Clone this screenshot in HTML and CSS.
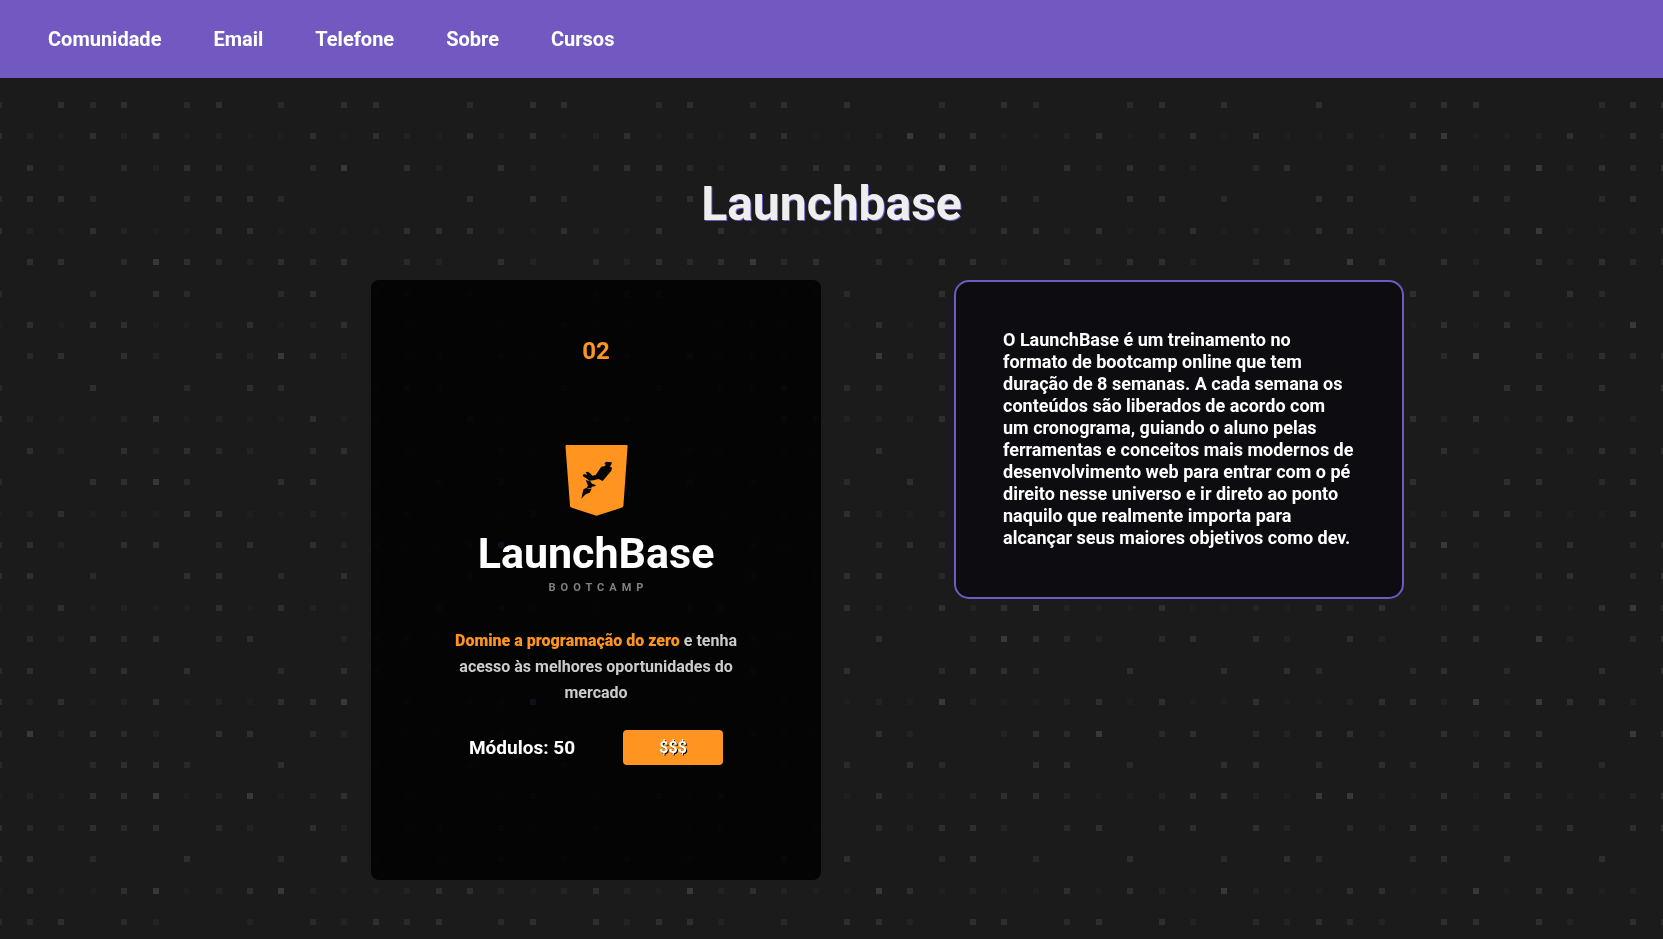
FILE: index.html
```html
<!DOCTYPE html>
<html lang="pt-BR">
<head>
  <meta charset="utf-8">
  <meta name="viewport" content="width=device-width, initial-scale=1">
  <title>Launchbase</title>
  <link rel="stylesheet" href="styles.css">
</head>
<body>
  <canvas class="backdrop" aria-hidden="true"></canvas>

  <header class="header">
    <nav class="links">
      <a href="#comunidade">Comunidade</a>
      <a href="#email">Email</a>
      <a href="#telefone">Telefone</a>
      <a href="#sobre">Sobre</a>
      <a href="#cursos">Cursos</a>
    </nav>
  </header>

  <main class="page">
    <h1 class="title">Launchbase</h1>

    <div class="course">
      <section class="card">
        <span class="card-number">02</span>
        <svg class="card-logo" viewBox="0 0 63 71" aria-hidden="true">
          <path fill="#ff9520" d="M1.6 0H61.4Q62.7 0 62.6 1.4L58.4 60.8Q58.2 62.2 57 62.6L31.5 70.8 6.2 62.6Q5.2 62.2 5 60.8L.5 1.4Q.4 0 1.6 0Z"/>
          <g fill="#050505" transform="translate(-25 -15) scale(.3333)">
            <path d="M198 95 216 97 213 106 209 109 216 113 214 122 188 153 176 147 160 151 148 152 141 146 128 138 131 132 142 134 137 127 144 125 153 132 157 137 167 135 184 110 193 109 198 104 193 102Z"/>
            <path d="M137 150 151 154 156 161 168 165 165 169 155 170 154 175 146 174 139 173 144 167Z"/>
            <path d="M131 177 140 174 147 176 155 176 149 188 137 193 124 206 128 187Z"/>
          </g>
        </svg>
        <h2 class="card-name">LaunchBase</h2>
        <span class="card-kind">BOOTCAMP</span>
        <p class="card-text"><strong>Domine a programação do zero</strong> e tenha acesso às melhores oportunidades do mercado</p>
        <div class="card-footer">
          <span class="modules">Módulos: 50</span>
          <button class="price" type="button">$$$</button>
        </div>
      </section>

      <section class="about">
        <p>O LaunchBase é um treinamento no formato de bootcamp online que tem duração de 8 semanas. A cada semana os conteúdos são liberados de acordo com um cronograma, guiando o aluno pelas ferramentas e conceitos mais modernos de desenvolvimento web para entrar com o pé direito nesse universo e ir direto ao ponto naquilo que realmente importa para alcançar seus maiores objetivos como dev.</p>
      </section>
    </div>
  </main>

  <script src="backdrop.js"></script>
</body>
</html>
```

FILE: styles.css
```css
* {
  box-sizing: border-box;
  margin: 0;
  padding: 0;
}

body {
  min-height: 100vh;
  background: #1b1b1b;
  color: #fff;
  font-family: Roboto, "Liberation Sans", sans-serif;
  font-weight: 700;
}

.backdrop {
  position: fixed;
  inset: 0;
  z-index: -1;
}

.header {
  padding: 27px 48px;
  background: #7159c1;
}

.links {
  display: flex;
  flex-wrap: wrap;
  gap: 8px 52px;
}

.links a {
  color: #fff;
  font-size: 20px;
  line-height: 24px;
  text-decoration: none;
}

.page {
  padding: 98px 0 48px;
}

.title {
  margin-bottom: 48px;
  color: #eee;
  font-size: 48px;
  line-height: 56px;
  text-align: center;
  text-shadow: 1px 1px #7159c1;
}

.course {
  display: grid;
  grid-template-columns: 1fr 1fr;
  align-items: start;
  gap: 133px;
  max-width: 1145px;
  margin: 0 auto;
  padding-left: 112px;
}

.card {
  display: flex;
  flex-direction: column;
  align-items: center;
  min-height: 600px;
  padding: 57px 80px;
  border-radius: 8px;
  background: rgba(0, 0, 0, 0.85);
}

.card-number {
  margin-bottom: 80px;
  color: #ff9520;
  font-size: 24px;
  line-height: 28px;
}

.card-logo {
  width: 63px;
  height: 71px;
  margin-bottom: 12px;
}

.card-name {
  font-size: 43px;
  line-height: 50px;
}

.card-kind {
  margin: 3px 0 33px;
  padding-left: 5px;
  color: #808080;
  font-size: 11px;
  line-height: 14px;
  letter-spacing: 5px;
}

.card-text {
  color: #ccc;
  font-size: 16px;
  line-height: 26px;
  text-align: center;
}

.card-text strong {
  color: #ff9520;
}

.card-footer {
  display: flex;
  align-items: center;
  gap: 48px;
  margin-top: 24px;
}

.modules {
  font-size: 19px;
  white-space: nowrap;
}

.price {
  width: 100px;
  height: 35px;
  border: 0;
  border-radius: 4px;
  background: #ff9520;
  color: #fff;
  font: inherit;
  font-size: 16px;
  text-shadow: 1px 1px #000;
  cursor: pointer;
}

.about {
  padding: 47px 47px 48px;
  border: 2px solid #7159c1;
  border-radius: 15px;
  background: #0d0d11;
  font-size: 18px;
  line-height: 22px;
}

@media (max-width: 1160px) {
  .course {
    grid-template-columns: minmax(0, 450px);
    justify-content: center;
    gap: 48px;
    padding: 0 16px;
  }
}
```

FILE: backdrop.js
```js
// Grid of small squares; each digit is the brightness of one square, p is purple.
const rows = [
  "304340 340304 40 0304400340340 4003043003404 00400344000344",
  "421424 121141 42 1424124121441 1254411241241 41121451124143",
  "042032 432035 04 2042034432034 4325420424320 34032042452434",
  "344300 344300 00 0404300340000 0020043004403 00440304300340",
  "421421 144121 14 4421421404121 1411244241241 21441121451124",
  "044035 432434 03 2042032434534 0324420424420 34054042042433",
  "300304 300340 33 0300034400033 3004 00300403004003 404304300",
  "141441 124124 02 1121422112321 1413 24411241124112 141421150",
  "034042 032532 02 3032003042330 0534 03204203403204 035042433",
  "300400 304300 34 3000400403340 3303 00430040030400 000440404",
  "421124 121141 31 1421144111144 2224 12411241214121 424124120",
  "042042 432034 02 0032000032032 0400 20304203042030 042032433",
  "300445 300440 30 3040000040300 3040 30040030040300 400440340",
  "124121 441121 33 1124111112132 4212 41214214112411 124421140",
  "342044 034042 32 23p0000000320 0343 04203403200452 452034033",
  "440300 440304 30 0400000000303 4403004403004 00304034034034",
  "124121 141421 31 4043121144111 4214245211411 21424124121453",
  "032434 034002 33 2020000000320 0400354320340 42042034052034",
  "340340 400304 30 0300400300400 4003443004004 04300340300404",
  "424124 121445 13 133p212121131 1215211241411 41124425154420",
  "352432 044032 02 2032000000332 0420024350340 32442042440054",
  "300344 300400 30 0300400340030 3043004403004 40304304340300",
  "121445 125124 12 1124121424101 1411244211244 21551141421124",
  "432434 032042 02 3042030023003 0324420340340 42032432034044",
  "440300 400304 30 2040304030040 4003403004003 04300340400400",
  "131145 124521 12 4421242152421 1541211414215 21144125144120",
  "334032 002032 43 4034042442030 4420440340420 32432044042043"
].map(row => row.replaceAll(" ", ""));
const shades = {
  1: "#1f1f1f",
  2: "#232323",
  3: "#292929",
  4: "#2e2e2e",
  5: "#383838",
  p: "#7159c1"
};
const pitch = 31.43;
const size = 6;

const canvas = document.querySelector(".backdrop");
const pen = canvas.getContext("2d");

function draw() {
  canvas.width = window.innerWidth;
  canvas.height = window.innerHeight;
  for (let r = 0; 102 + r * pitch < canvas.height; r++) {
    const row = rows[r % rows.length];
    for (let c = 0; c * pitch - 5 < canvas.width; c++) {
      const shade = shades[row[c % row.length]];
      if (!shade) continue;
      pen.fillStyle = shade;
      pen.fillRect(Math.round(c * pitch - 4.4), Math.round(102 + r * pitch), size, size);
    }
  }
}

draw();
window.addEventListener("resize", draw);
```
